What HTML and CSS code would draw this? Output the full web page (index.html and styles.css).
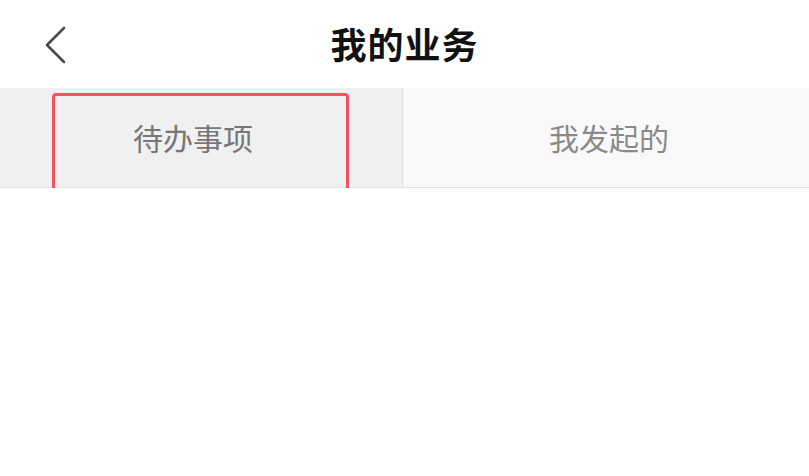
FILE: index.html
```html
<!doctype html>
<html>

<head>
    <meta charset="UTF-8">
    <title>我的业务</title>
    <link rel="stylesheet" href="styles.css">
</head>

<body>
    <div class="header">
        <a class="back" href="#">
            <svg width="28" height="40" viewBox="0 0 28 40">
                <path d="M23 3 L6 20 L23 37" fill="none" stroke="#4a4a4a" stroke-width="2.6" stroke-linecap="round" stroke-linejoin="round"/>
            </svg>
        </a>
        <h1>我的业务</h1>
    </div>

    <div class="tabs">
        <div class="tab active">待办事项</div>
        <div class="tab">我发起的</div>
    </div>
    <!-- 标注框 -->
    <div class="mark"></div>
</body>

</html>
```

FILE: styles.css
```css
html {
    --tab-active-bg: #f0f0f0;
    --tab-bg: #f9f9f9;
    --line: #e2e2e2;
    --mark: #f2545b;
}
* {
    box-sizing: border-box;
}
body {
    margin: 0;
    font-family: "Noto Sans CJK SC", "Noto Sans", sans-serif;
    background-color: #fff;
    position: relative;
}
.header {
    height: 88px;
    display: flex;
    align-items: center;
    justify-content: center;
    position: relative;
}
.header h1 {
    margin: 0 0 2px 0;
    font-size: 36px;
    font-weight: bold;
    color: #111;
    letter-spacing: 1px;
}
.header .back {
    position: absolute;
    left: 41px;
    top: 25px;
    display: block;
    width: 28px;
    height: 40px;
}
.tabs {
    display: flex;
    height: 100px;
    border-bottom: 1px solid var(--line);
}
.tab {
    display: flex;
    align-items: center;
    justify-content: center;
    font-size: 30px;
    color: #8a8a8a;
    background-color: var(--tab-bg);
    padding-bottom: 2px;
}
.tab.active {
    width: 403px;
    background-color: var(--tab-active-bg);
    color: #777;
    border-right: 1px solid var(--line);
    padding-right: 16px;
}
.tab + .tab {
    flex: 1;
    padding-left: 6px;
}
.mark {
    position: absolute;
    z-index: 5;
    left: 52px;
    top: 93px;
    width: 297px;
    height: 98px;
    border-radius: 4px;
    box-shadow: inset 0 0 0 3px var(--mark);
}
```
